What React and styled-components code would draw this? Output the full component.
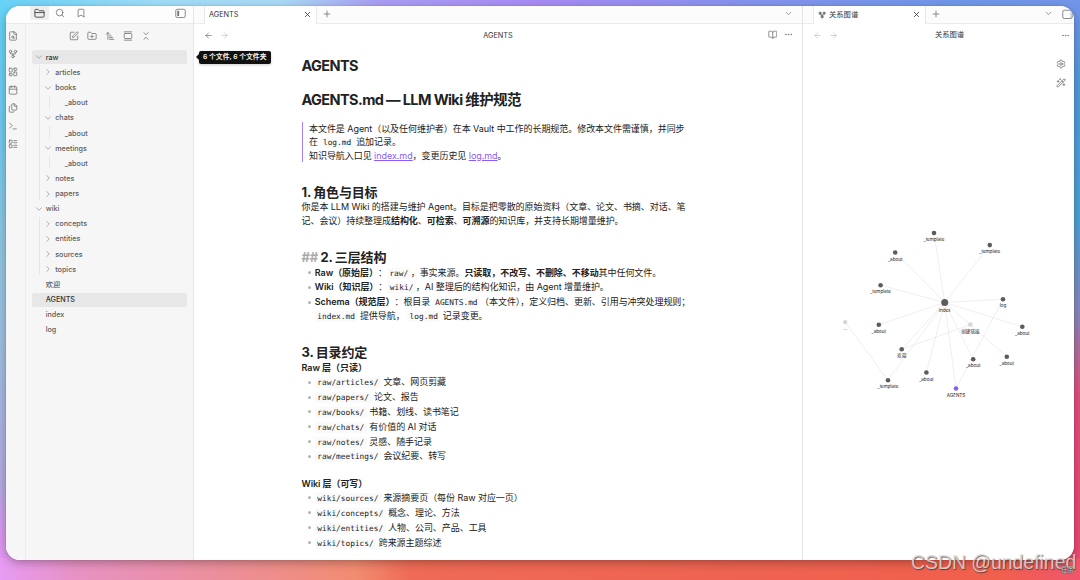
import React from "react";
import styled, { createGlobalStyle } from "styled-components";
import {
  ArrowLeft, ArrowRight, ArrowUpNarrowWide, Bookmark, BookOpen, Calendar,
  ChevronDown, ChevronRight, ChevronsDownUp, Ellipsis, Files, FolderClosed, FolderPlus,
  GalleryVertical, GitFork, LayoutDashboard, LayoutList, Plus, Search, Settings,
  SquarePen, Terminal, WandSparkles, X,
} from "lucide-react";

const GlobalStyle = createGlobalStyle`
  * { box-sizing: border-box; }
  body {
    margin: 0;
    overflow: hidden;
    font-family: Inter, "Noto Sans CJK SC", sans-serif;
    color: #222;
  }
  svg { display: block; flex: none; }
`;

const Desktop = styled.div`
  position: relative;
  width: 1080px;
  height: 580px;
  padding: 6px 6.5px 20.5px 6px;
  background:
    linear-gradient(90deg, #67d2f7 0%, #9edcf8 14%, #aadaf7 26%, #a99ef3 35%, #a88bf3 50%, #8493ee 70%, #7097e8 88%, #7395e8 100%) 0 0 / 1080px 8px no-repeat,
    linear-gradient(90deg, #e79bf3 0%, #e792c4 7%, #ec8f9c 20%, #f28c71 33%, #ef6b55 38%, #ee6350 70%, #f1604c 92%, #f0556b 100%) 0 558px / 1080px 22px no-repeat,
    linear-gradient(180deg, #65d2f7 0%, #6cc9ee 20%, #92c5e0 45%, #a0bce0 62%, #b4a8e2 84%, #d995ee 92%, #e79bf3 100%) 0 0 / 20px 580px no-repeat,
    linear-gradient(180deg, #7395e8 0%, #529bd8 14%, #4e9fd6 38%, #8888bd 54%, #e04f7c 68%, #ee486e 100%) 1060px 0 / 20px 580px no-repeat;
`;

const Window = styled.div`
  display: flex;
  height: 100%;
  border-radius: 14px;
  overflow: hidden;
  background: #fff;
`;

const WindowShadow = styled.div`
  height: 100%;
  border-radius: 14px;
  box-shadow: 0 0 1px rgba(0, 0, 0, 0.35), 0 3px 10px rgba(0, 0, 0, 0.28);
`;

const Left = styled.div`
  display: flex;
  flex-direction: column;
  width: 188px;
  background: #f6f6f6;
  border-right: 1px solid #e6e6e6;
`;

const LeftTop = styled.div`
  display: flex;
  align-items: flex-start;
  height: 18px;
  padding: 0 6.5px 0 24px;
  background: #fdfdfd;
  border-bottom: 1px solid #ebebeb;
  color: #666;
`;

const TopButton = styled.div`
  display: flex;
  align-items: center;
  justify-content: center;
  width: ${(p) => p.$w || 19}px;
  height: 14px;
  margin-right: ${(p) => p.$gap || 0}px;
  margin-left: ${(p) => (p.$end ? "auto" : 0)};
  border-radius: 0 0 3px 3px;
  background: ${(p) => (p.$active ? "#eee" : "transparent")};
  color: ${(p) => (p.$active ? "#444" : "#777")};
`;

const LeftBody = styled.div`
  display: flex;
  flex: 1;
`;

const Ribbon = styled.div`
  display: flex;
  flex-direction: column;
  gap: 8px;
  width: 20px;
  padding: 7px 0 0 2px;
  border-right: 1.5px solid #ededed;
  color: #777;
`;

const Explorer = styled.div`
  flex: 1;
  padding: 7px 6px 0;
`;

const Tools = styled.div`
  display: flex;
  justify-content: center;
  gap: 8px;
  height: 19.3px;
  padding-left: 0.6px;
  color: #777;
`;

const Row = styled.div`
  display: flex;
  align-items: center;
  height: 14px;
  margin-bottom: 1.15px;
  padding-left: ${(p) => 1.7 + p.$level * 9.5}px;
  border-radius: 2.5px;
  background: ${(p) => (p.$active ? "#e7e7e7" : "transparent")};
  color: ${(p) => (p.$active ? "#333" : "#5c5c5c")};
  font-size: 7.2px;
  font-weight: ${(p) => (p.$active ? 500 : 450)};
  white-space: nowrap;
`;

const Twist = styled.span`
  display: flex;
  width: 12px;
  color: #a0a0a0;
`;

// vertical guide behind the children of an open folder
const Branch = styled.div`
  background: linear-gradient(#e6e6e6, #e6e6e6) ${(p) => p.$x}px 0 / 1px calc(100% - 1px) no-repeat;
`;

const Pane = styled.div`
  display: flex;
  flex-direction: column;
  flex: ${(p) => (p.$w ? "none" : 1)};
  width: ${(p) => (p.$w ? p.$w + "px" : "auto")};
  border-right: ${(p) => (p.$w ? "1px solid #e4e4e4" : "none")};
`;

const TabBar = styled.div`
  display: flex;
  height: 18px;
  background: #fcfcfc;
`;

const TabEdge = styled.div`
  width: 10px;
  border-bottom: 1px solid #ebebeb;
`;

const Tab = styled.div`
  display: flex;
  align-items: center;
  width: 113px;
  padding: 0 4px 1px 4px;
  background: #fff;
  border: 1px solid #e9e9e9;
  border-width: 0 1px;
  font-size: 7.3px;
  line-height: 9px;
  color: #333;
`;

const TabName = styled.span`
  flex: 1;
  margin-left: ${(p) => (p.$icon ? 3.5 : 0.5)}px;
  margin-top: ${(p) => (p.$icon ? -1 : 0)}px;
`;

const TabRest = styled.div`
  display: flex;
  flex: 1;
  justify-content: space-between;
  padding: 3px ${(p) => p.$pad}px 0 5px;
  border-bottom: 1px solid #ebebeb;
  border-bottom-left-radius: 2px;
  color: #777;
`;

const ViewHeader = styled.div`
  display: grid;
  grid-template-columns: ${(p) => p.$lead || 60}px 1fr 60px;
  align-items: center;
  height: 22px;
  padding: 0 ${(p) => p.$right || 9}px 0 10px;
  font-size: 7.3px;
  line-height: 9px;
  color: #333;
  text-align: center;
`;

const ViewName = styled.span`
  padding-bottom: ${(p) => (p.$cjk ? 2 : 0)}px;
`;

const Nav = styled.div`
  display: flex;
  gap: 7px;
  color: ${(p) => (p.$off ? "#c4c4c4" : "#777")};
  svg + svg { color: #c4c4c4; }
`;

const Actions = styled.div`
  display: flex;
  justify-content: flex-end;
  gap: ${(p) => p.$gap || 6.5}px;
  color: #777;
`;

const Note = styled.div`
  padding: 10px 0 0 108px;
  font-size: 9px;
  line-height: 13.5px;
  letter-spacing: -0.055px;
  white-space: nowrap;
`;

const Title = styled.div`
  height: 20px;
  margin-bottom: 14px;
  font-size: 14.5px;
  line-height: 20px;
  font-weight: 700;
  letter-spacing: -0.62px;
`;

const Quote = styled.div`
  height: 40.2px;
  margin-top: -2.2px;
  padding-left: 6.5px;
  border-left: 1.5px solid #a882ff;
`;

const H2 = styled.div`
  height: 15px;
  margin-top: ${(p) => p.$top}px;
  font-size: 13px;
  line-height: 15px;
  font-weight: 650;
  letter-spacing: -0.011em;
  word-spacing: -0.5px;
`;

const Hash = styled.span`
  color: #ababab;
`;

const Paragraph = styled.div`
  margin-top: ${(p) => p.$top || 0.75}px;
  font-weight: ${(p) => (p.$bold ? 600 : 400)};
`;

const Line = styled.div`
  height: 13.5px;
`;

const Item = styled.div`
  display: flex;
  padding: 0.65px 0;

  &::before {
    content: "";
    flex: none;
    width: 3px;
    height: 3px;
    margin: 5.3px 3.4px 0 6.9px;
    border-radius: 50%;
    background: #b4b4b4;
  }
`;

const Code = styled.code`
  padding: 1px 2.5px;
  border-radius: 2px;
  background: #fafafa;
  font-family: "DejaVu Sans Mono", monospace;
  font-size: 7.82px;
  letter-spacing: 0;
`;

const Bold = styled.b`
  font-weight: 600;
`;

// keeps the full-width colon from being squeezed against the bracket before it
const Colon = styled.span`
  display: inline-block;
  width: 9px;
`;

const Term = styled(Bold)`
  text-spacing-trim: space-all;
`;

const Link = styled.span`
  color: #8a5cf5;
  text-decoration: underline;
`;

const GraphBody = styled.div`
  flex: 1;
  position: relative;
`;

const GraphTools = styled.div`
  position: absolute;
  top: 13px;
  right: 7.5px;
  display: flex;
  flex-direction: column;
  gap: 9px;
  color: #777;
`;

const GraphSvg = styled.svg`
  width: 271px;
  height: 513px;
  text {
    font-size: 4.6px;
    fill: #222;
    text-anchor: middle;
  }
`;

const Tooltip = styled.div`
  position: absolute;
  left: 198.5px;
  top: 50.5px;
  width: 72.5px;
  height: 13px;
  border-radius: 2px;
  background: #111;
  color: #f5f5f5;
  font-size: 6.8px;
  font-weight: 600;
  line-height: 12.5px;
  text-align: center;
  white-space: nowrap;
  box-shadow: 0 1px 3px rgba(0, 0, 0, 0.2);

  &::before {
    content: "";
    position: absolute;
    left: -3px;
    top: 3.5px;
    border: 3px solid transparent;
    border-left: 0;
    border-right-color: #111;
  }
`;

const Watermark = styled.div`
  position: absolute;
  left: 911px;
  top: 551px;
  font-family: "Liberation Sans", sans-serif;
  font-size: 19.4px;
  line-height: 23px;
  color: rgba(225, 222, 222, 0.85);
  text-shadow: 0.7px 0.7px 0.8px rgba(60, 50, 50, 0.75);
  white-space: nowrap;
`;

const Corner = styled.div`
  position: absolute;
  left: 1061px;
  top: 565px;
  font-size: 6.4px;
  line-height: 10px;
  color: #ddd;
  text-shadow: 0 0 1px #222, 0 0 1px #222;
`;

const FileSearchIcon = () => (
  <svg width="10" height="10" viewBox="0 0 24 24" fill="none" stroke="currentColor" strokeWidth="2" strokeLinecap="round" strokeLinejoin="round">
    <path d="M15 2H6a2 2 0 0 0-2 2v16a2 2 0 0 0 2 2h12a2 2 0 0 0 2-2V7Z" />
    <path d="M14 2v4a2 2 0 0 0 2 2h4" />
    <circle cx="11.5" cy="14.5" r="2.5" />
    <path d="M13.3 16.3 15 18" />
  </svg>
);

const SidebarIcon = ({ right }) => (
  <svg width="11" height="11" viewBox="0 0 22 22" fill="none" stroke="currentColor" strokeWidth="1.7">
    <rect x="1.5" y="2.5" width="19" height="16.5" rx="3" />
    {right ? <path d="M17.8 4v14" strokeWidth="1.3" opacity="0.6" /> : <rect x="4.5" y="5.5" width="3.8" height="10.5" fill="currentColor" stroke="none" />}
  </svg>
);

const tree = [
  { name: "raw", active: true, children: [
    { name: "articles", closed: true },
    { name: "books", children: [{ name: "_about" }] },
    { name: "chats", children: [{ name: "_about" }] },
    { name: "meetings", children: [{ name: "_about" }] },
    { name: "notes", closed: true },
    { name: "papers", closed: true },
  ] },
  { name: "wiki", children: [
    { name: "concepts", closed: true },
    { name: "entities", closed: true },
    { name: "sources", closed: true },
    { name: "topics", closed: true },
  ] },
  { name: "欢迎" },
  { name: "AGENTS", active: true },
  { name: "index" },
  { name: "log" },
];

const TreeNode = ({ node, level }) => (
  <>
    <Row $level={level} $active={node.active}>
      <Twist>
        {node.children && <ChevronDown size={10} />}
        {node.closed && <ChevronRight size={10} />}
      </Twist>
      {node.name}
    </Row>
    {node.children && (
      <Branch $x={7 + level * 9.5}>
        {node.children.map((child, i) => <TreeNode key={i} node={child} level={level + 1} />)}
      </Branch>
    )}
  </>
);

const rawDirs = [
  ["raw/articles/", "文章、网页剪藏"],
  ["raw/papers/", "论文、报告"],
  ["raw/books/", "书籍、划线、读书笔记"],
  ["raw/chats/", "有价值的 AI 对话"],
  ["raw/notes/", "灵感、随手记录"],
  ["raw/meetings/", "会议纪要、转写"],
];

const wikiDirs = [
  ["wiki/sources/", "来源摘要页（每份 Raw 对应一页）"],
  ["wiki/concepts/", "概念、理论、方法"],
  ["wiki/entities/", "人物、公司、产品、工具"],
  ["wiki/topics/", "跨来源主题综述"],
];

const DirList = ({ dirs }) => dirs.map(([path, text]) => (
  <Item key={path}>
    <Line><Code>{path}</Code> {text}</Line>
  </Item>
));

// node positions inside the graph pane
const center = [141.7, 256.5];
const nodes = [
  [131, 187, "_template"],
  [186.8, 199.1, "_template"],
  [92.2, 206.5, "_about"],
  [77.6, 239.2, "_template"],
  [200, 253.2, "log"],
  [75.8, 278.8, "_about"],
  [219.3, 280.8, "_about"],
  [98.7, 303.3, "欢迎"],
  [203.8, 310.8, "_about"],
  [170.2, 313.3, "_about"],
  [123.4, 326.5, "_about"],
  [85, 334.3, "_template"],
];
const ghost = [167.4, 278.6];
const agents = [153, 342.5];
const lost = [42.2, 276.2];

const edges = [
  ...nodes.map((n) => [center, n]),
  [center, agents],
  [ghost, nodes[7]],
  [nodes[4], agents],
  [lost, nodes[11]],
];

const Graph = () => (
  <GraphSvg viewBox="0 0 271 513">
    {edges.map(([a, b], i) => (
      <line key={i} x1={a[0]} y1={a[1]} x2={b[0]} y2={b[1]} stroke="#e4e4e4" strokeWidth="0.6" />
    ))}
    {nodes.map(([x, y, name], i) => (
      <g key={i}>
        <circle cx={x} cy={y} r="2.3" fill="#5c5c5c" />
        <text x={x} y={y + 8}>{name}</text>
      </g>
    ))}
    <circle cx={center[0]} cy={center[1]} r="3.5" fill="#5c5c5c" />
    <text x={center[0]} y={center[1] + 9.3}>index</text>
    <circle cx={ghost[0]} cy={ghost[1]} r="2.3" fill="#d6d6d6" />
    <text x={ghost[0]} y={ghost[1] + 8}>创建链接</text>
    <circle cx={agents[0]} cy={agents[1]} r="2.3" fill="#8a5cf5" />
    <text x={agents[0]} y={agents[1] + 8}>AGENTS</text>
    <circle cx={lost[0]} cy={lost[1]} r="2.1" fill="#d6d6d6" />
    <text x={lost[0]} y={lost[1] + 8}>...</text>
  </GraphSvg>
);

const App = () => {
  return (
    <>
      <GlobalStyle />
      <Desktop>
        <WindowShadow>
          <Window>
            <Left>
              <LeftTop>
                <TopButton $active $gap={1.6}><FolderClosed size={11} /></TopButton>
                <TopButton $gap={2}><Search size={10} /></TopButton>
                <TopButton><Bookmark size={10} /></TopButton>
                <TopButton $w={11} $end><SidebarIcon /></TopButton>
              </LeftTop>
              <LeftBody>
                <Ribbon>
                  <FileSearchIcon />
                  <GitFork size={10} />
                  <LayoutDashboard size={10} />
                  <Calendar size={10} />
                  <Files size={10} />
                  <Terminal size={10} />
                  <LayoutList size={10} />
                </Ribbon>
                <Explorer>
                  <Tools>
                    <SquarePen size={10} />
                    <FolderPlus size={10} />
                    <ArrowUpNarrowWide size={10} />
                    <GalleryVertical size={10} />
                    <ChevronsDownUp size={10} />
                  </Tools>
                  {tree.map((node) => <TreeNode key={node.name} node={node} level={0} />)}
                </Explorer>
              </LeftBody>
            </Left>

            <Pane $w={609}>
              <TabBar>
                <TabEdge />
                <Tab>
                  <TabName>AGENTS</TabName>
                  <X size={9} />
                </Tab>
                <TabRest $pad={9}>
                  <Plus size={10} />
                  <ChevronDown size={9} />
                </TabRest>
              </TabBar>
              <ViewHeader>
                <Nav><ArrowLeft size={9} /><ArrowRight size={9} /></Nav>
                <ViewName>AGENTS</ViewName>
                <Actions><BookOpen size={9.5} /><Ellipsis size={9} /></Actions>
              </ViewHeader>
              <Note>
                <Title>AGENTS</Title>
                <Title>AGENTS.md — LLM Wiki 维护规范</Title>
                <Quote>
                  <Line>本文件是 Agent（以及任何维护者）在本 Vault 中工作的长期规范。修改本文件需谨慎，并同步</Line>
                  <Line>在 <Code>log.md</Code> 追加记录。</Line>
                  <Line>知识导航入口见 <Link>index.md</Link>，变更历史见 <Link>log.md</Link>。</Line>
                </Quote>

                <H2 $top={22.5}>1. 角色与目标</H2>
                <Paragraph>
                  <Line>你是本 LLM Wiki 的搭建与维护 Agent。目标是把零散的原始资料（文章、论文、书摘、对话、笔</Line>
                  <Line>记、会议）持续整理成<Bold>结构化</Bold>、<Bold>可检索</Bold>、<Bold>可溯源</Bold>的知识库，并支持长期增量维护。</Line>
                </Paragraph>

                <H2 $top={22.75}><Hash>##</Hash> 2. 三层结构</H2>
                <Item>
                  <Line><Term>Raw（原始层）</Term><Colon>：</Colon><Code>raw/</Code>，事实来源。<Bold>只读取，不改写、不删除、不移动</Bold>其中任何文件。</Line>
                </Item>
                <Item>
                  <Line><Term>Wiki（知识层）</Term><Colon>：</Colon><Code>wiki/</Code>，AI 整理后的结构化知识，由 Agent 增量维护。</Line>
                </Item>
                <Item>
                  <div>
                    <Line><Term>Schema（规范层）</Term><Colon>：</Colon>根目录 <Code>AGENTS.md</Code>（本文件），定义归档、更新、引用与冲突处理规则；</Line>
                    <Line><Code>index.md</Code> 提供导航， <Code>log.md</Code> 记录变更。</Line>
                  </div>
                </Item>

                <H2 $top={22.6}>3. 目录约定</H2>
                <Paragraph $bold $top={0.9}>Raw 层（只读）</Paragraph>
                <DirList dirs={rawDirs} />
                <Paragraph $bold $top={13.5}>Wiki 层（可写）</Paragraph>
                <DirList dirs={wikiDirs} />
              </Note>
            </Pane>

            <Pane>
              <TabBar>
                <TabEdge />
                <Tab>
                  <GitFork size={8} />
                  <TabName $icon>关系图谱</TabName>
                  <X size={9} />
                </Tab>
                <TabRest $pad={1}>
                  <Plus size={10} />
                  <Actions $gap={8.5}><ChevronDown size={9} /><SidebarIcon right /></Actions>
                </TabRest>
              </TabBar>
              <ViewHeader $right={4} $lead={77}>
                <Nav $off><ArrowLeft size={9} /><ArrowRight size={9} /></Nav>
                <ViewName $cjk>关系图谱</ViewName>
                <Actions><Ellipsis size={9} /></Actions>
              </ViewHeader>
              <GraphBody>
                <GraphTools>
                  <Settings size={10} />
                  <WandSparkles size={10} />
                </GraphTools>
                <Graph />
              </GraphBody>
            </Pane>
          </Window>
        </WindowShadow>
        <Tooltip>6 个文件, 6 个文件夹</Tooltip>
        <Watermark>CSDN @undefined</Watermark>
        <Corner>任务</Corner>
      </Desktop>
    </>
  );
};

export default App;
